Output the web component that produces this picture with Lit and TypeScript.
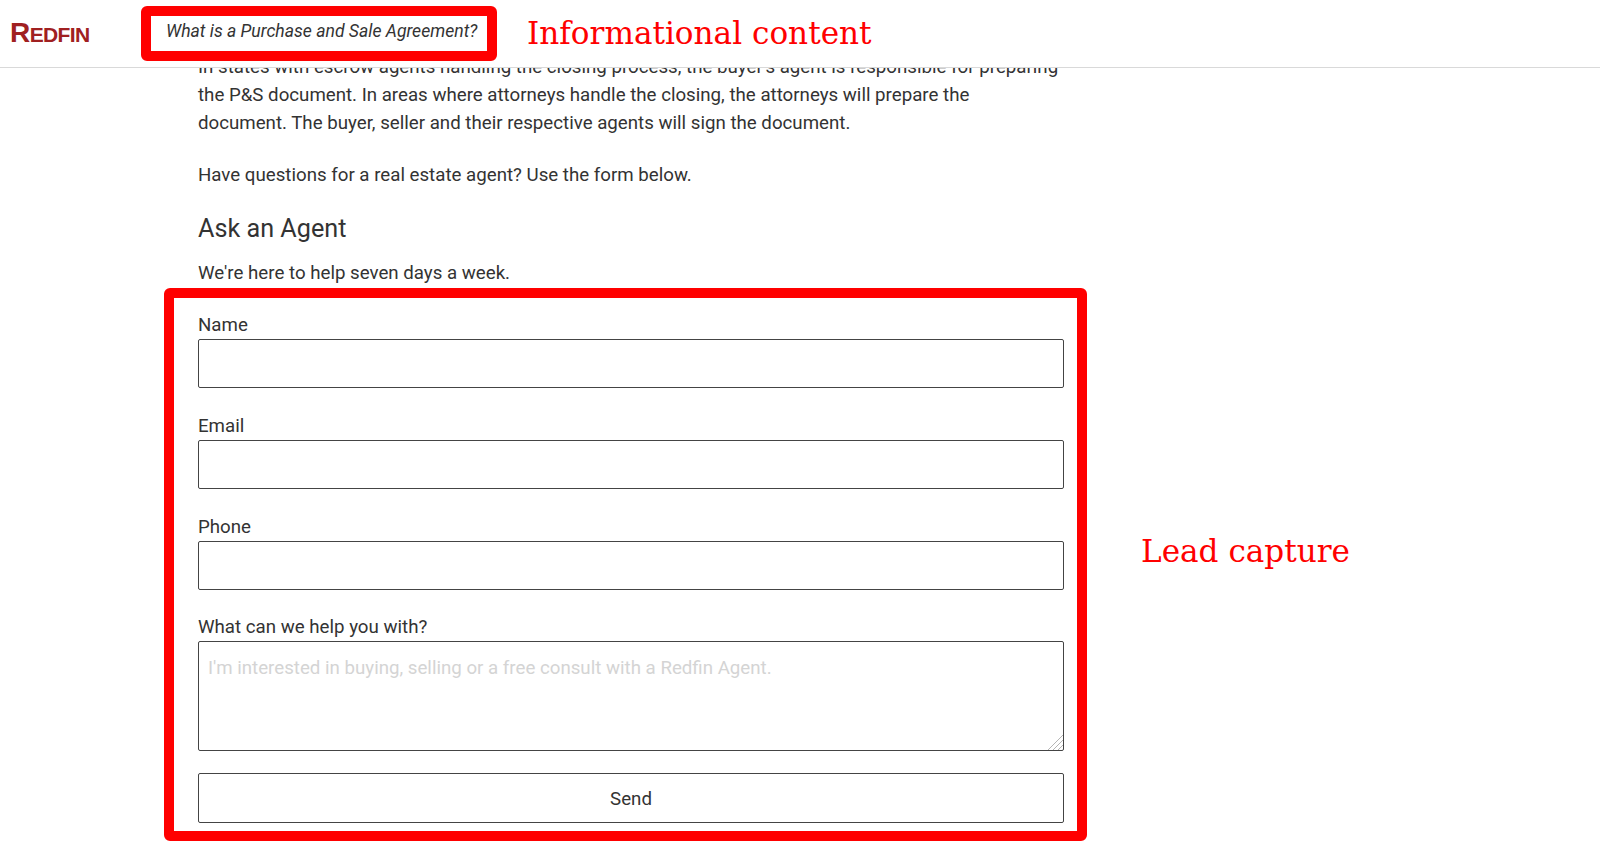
import { LitElement, html, css } from "lit";
import { customElement } from "lit/decorators.js";

@customElement("app-root")
export class AppRoot extends LitElement {
  static styles = css`
    :host { display: block; width: 1600px; height: 860px; overflow: hidden; background: #fff; color: #333;
      font-family: "Roboto", "Liberation Sans", sans-serif; font-size: 18.7px; }
    * { box-sizing: border-box; }
    header { height: 68px; border-bottom: 1px solid #d9d9d9; display: flex; align-items: flex-start; background: #fff; position: relative; z-index: 1; }
    .logo { margin: 18px 0 0 10px; width: 131px; font-family: "Liberation Sans", sans-serif; font-weight: 700; color: #a02021; font-size: 21px; line-height: 30px; letter-spacing: -0.6px; }
    .logo span { font-size: 28px; }
    .tag { margin-top: 6px; width: 356px; height: 55px; border: 10px solid #f00; border-radius: 6px; display: flex; align-items: center; padding: 0 0 5px 15px; font-style: italic; font-size: 17.6px; white-space: nowrap; }
    .note { color: #f00; font-family: "DejaVu Serif", serif; font-size: 31.1px; white-space: nowrap; }
    .note.top { margin: 12px 0 0 30px; line-height: 42px; }
    main { height: 792px; overflow: hidden; padding-left: 198px; }
    p { margin: 0; width: 862px; line-height: 28px; font-size: 18.7px; }
    .intro { margin-top: -15px; }
    .q { margin-top: 24px; }
    h2 { margin: 24px 0 0; font-weight: 400; font-size: 25.2px; line-height: 32px; color: #333; }
    .sub { margin-top: 14px; }
    .row { display: flex; align-items: flex-start; margin: 1px 0 0 -34px; }
    form { width: 923px; height: 553px; flex: none; border: 10px solid #f00; border-radius: 6px; padding: 15px 13px 0 24px; }
    label { display: block; line-height: 24px; height: 26px; }
    input, textarea, button { display: block; width: 100%; border: 1px solid #444; border-radius: 2px; background: #fff; font: inherit; margin: 0; }
    input { height: 49px; margin-bottom: 26px; }
    input.last { margin-bottom: 25px; }
    .area { position: relative; margin-bottom: 22px; }
    textarea { height: 110px; padding: 12px 9px; line-height: 28px; color: #333; resize: none; }
    textarea::placeholder { color: #d4d4d4; opacity: 1; }
    .grip { position: absolute; right: 1px; bottom: 1px; width: 15px; height: 15px; }
    button { height: 50px; color: #333; padding: 2px 0 0; }
    .note.side { margin: 242px 0 0 54px; line-height: 42px; }
  `;
  render() {
    return html`
      <header>
        <div class="logo"><span>R</span>EDFIN</div>
        <div class="tag">What is a Purchase and Sale Agreement?</div>
        <div class="note top">Informational content</div>
      </header>
      <main>
        <p class="intro">In states with escrow agents handling the closing process, the buyer's agent is responsible for preparing the P&amp;S document. In areas where attorneys handle the closing, the attorneys will prepare the document. The buyer, seller and their respective agents will sign the document.</p>
        <p class="q">Have questions for a real estate agent? Use the form below.</p>
        <h2>Ask an Agent</h2>
        <p class="sub">We're here to help seven days a week.</p>
        <div class="row">
          <form>
            <label>Name</label><input type="text" />
            <label>Email</label><input type="text" />
            <label>Phone</label><input class="last" type="text" />
            <label>What can we help you with?</label>
            <div class="area">
              <textarea placeholder="I'm interested in buying, selling or a free consult with a Redfin Agent."></textarea>
              <svg class="grip" viewBox="0 0 15 15" fill="none" stroke="#b5b5b5" stroke-width="1">
                <path d="M0 15 15 0M5 15 15 5M10 15 15 10" />
              </svg>
            </div>
            <button type="button">Send</button>
          </form>
          <div class="note side">Lead capture</div>
        </div>
      </main>
    `;
  }
}
